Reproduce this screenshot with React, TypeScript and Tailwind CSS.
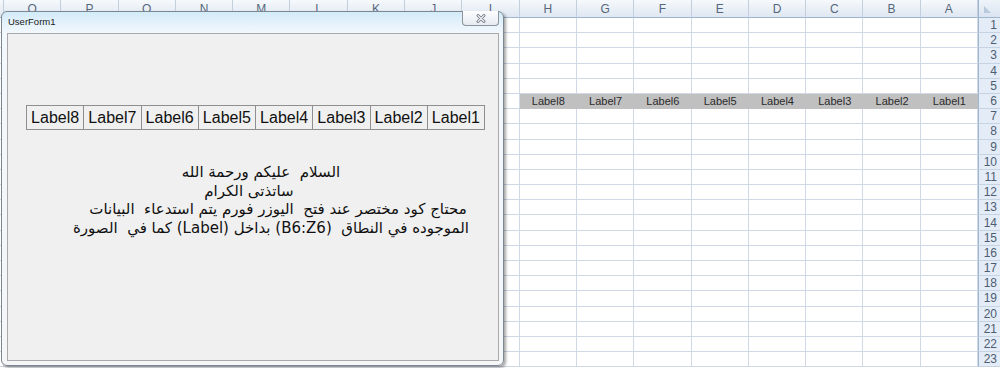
import React from 'react';

const COLS = ['Q', 'P', 'O', 'N', 'M', 'L', 'K', 'J', 'I', 'H', 'G', 'F', 'E', 'D', 'C', 'B', 'A'];
const LABEL_COLS: Record<string, string> = {
  H: 'Label8', G: 'Label7', F: 'Label6', E: 'Label5', D: 'Label4', C: 'Label3', B: 'Label2', A: 'Label1',
};
const ROWS = Array.from({ length: 23 }, (_, i) => i + 1);

function Sheet() {
  return (
    <div className="grid grid-cols-[4px_repeat(17,minmax(0,1fr))_22px] grid-rows-[18px_repeat(23,15.2px)] w-[1000px] font-['Liberation_Sans',Arial,sans-serif]">
      {/* header row */}
      <div className="bg-gradient-to-b from-[#f6f9fc] to-[#dfe7f1] border-r border-b border-r-[#c3cfdd] border-b-[#9eb6ce]" />
      {COLS.map((c) => (
        <div
          key={c}
          className="flex items-center justify-center bg-gradient-to-b from-[#f6f9fc] to-[#dfe7f1] border-r border-b border-r-[#c3cfdd] border-b-[#9eb6ce] text-[12px] text-[#56677c]"
        >
          {c}
        </div>
      ))}
      <div className="relative bg-gradient-to-b from-[#eef3f9] to-[#dae4f0] border-b border-l border-b-[#9eb6ce] border-l-[#9eb6ce]">
        <svg className="absolute left-[5px] top-[6px]" width="7" height="7" viewBox="0 0 7 7">
          <polygon points="0,0 0,7 7,7" fill="#b9c9dc" />
        </svg>
      </div>
      {/* body */}
      {ROWS.map((r) => (
        <React.Fragment key={r}>
          <div className="border-r border-b border-[#d0d7e5] bg-white" />
          {COLS.map((c) => {
            const lab = r === 6 ? LABEL_COLS[c] : undefined;
            return lab ? (
              <div
                key={c}
                className="flex items-center justify-center bg-[#c0c0c0] border-b border-b-[#c0c0c0] text-[11px] text-[#2a2a2a]"
              >
                {lab}
              </div>
            ) : (
              <div key={c} className="bg-white border-r border-b border-[#d0d7e5]" />
            );
          })}
          <div className="flex items-center justify-end pr-[3px] bg-[#e4ecf7] border-l border-b border-l-[#9eb6ce] border-b-[#c6d3e3] text-[12px] text-[#4d5d72]">
            {r}
          </div>
        </React.Fragment>
      ))}
    </div>
  );
}

function CloseGlyph() {
  return (
    <svg width="10" height="9" viewBox="0 0 10 9">
      <path d="M2 1.5 L8 7.5 M8 1.5 L2 7.5" stroke="#6b7480" strokeWidth="2.8" strokeLinecap="round" />
      <path d="M2 1.5 L8 7.5 M8 1.5 L2 7.5" stroke="#f4f6f8" strokeWidth="1.1" strokeLinecap="round" />
    </svg>
  );
}

function UserForm() {
  const labels = ['Label8', 'Label7', 'Label6', 'Label5', 'Label4', 'Label3', 'Label2', 'Label1'];
  return (
    <div className="absolute left-[1px] top-[11px] w-[503px] h-[355px] rounded-[6px] border border-[#7d8791] bg-gradient-to-b from-[#d3ebf9] via-[#f3f8fc] via-[6%] to-[#f4f6f8] shadow-[2px_2px_3px_rgba(0,0,0,0.35)] flex flex-col pl-[5px] pr-[4px] pb-[4px]">
      <div className="relative h-[21px] shrink-0 flex items-center">
        <span className="pl-[1px] text-[9.5px] text-[#1a1a1a] font-['Liberation_Sans',Arial,sans-serif]">UserForm1</span>
        <div className="absolute left-[455px] top-[-1px] w-[37px] h-[15px] rounded-b-[4px] border border-[#8d949c] border-t-0 bg-gradient-to-b from-[#fdfdfe] to-[#e6ebf1] flex items-center justify-center">
          <CloseGlyph />
        </div>
      </div>
      <div className="flex-1 border border-[#a9a9a9] bg-[#f0f0f0] flex flex-col">
        <div className="mt-[71px] ml-[18px] w-[459px] h-[25px] flex border border-[#8f8f8f] font-['Liberation_Sans',Arial,sans-serif]">
          {labels.map((l, i) => (
            <div
              key={l}
              className={`flex-1 flex items-center justify-center text-[16px] text-[#111] bg-[#f0f0f0] ${i > 0 ? 'border-l border-[#8f8f8f]' : ''}`}
            >
              {l}
            </div>
          ))}
        </div>
        <div
          dir="rtl"
          className="mt-[33px] ml-[18px] w-[470px] text-center text-[15px] leading-[18.5px] text-[#111] whitespace-pre font-['DejaVu_Sans',sans-serif]"
        >
          <div>السلام  عليكم ورحمة الله</div>
          <div className="pr-[24px]">ساتذتى الكرام</div>
          <div className="pl-[34px]">محتاج كود مختصر عند فتح  اليوزر فورم يتم استدعاء  البيانات</div>
          <div className="pl-[20px]">الموجوده في النطاق  (B6:Z6) بداخل (Label) كما في  الصورة</div>
        </div>
      </div>
    </div>
  );
}

export default function App() {
  return (
    <div className="relative w-[1000px] h-[368px] overflow-hidden bg-white">
      <Sheet />
      <UserForm />
    </div>
  );
}
